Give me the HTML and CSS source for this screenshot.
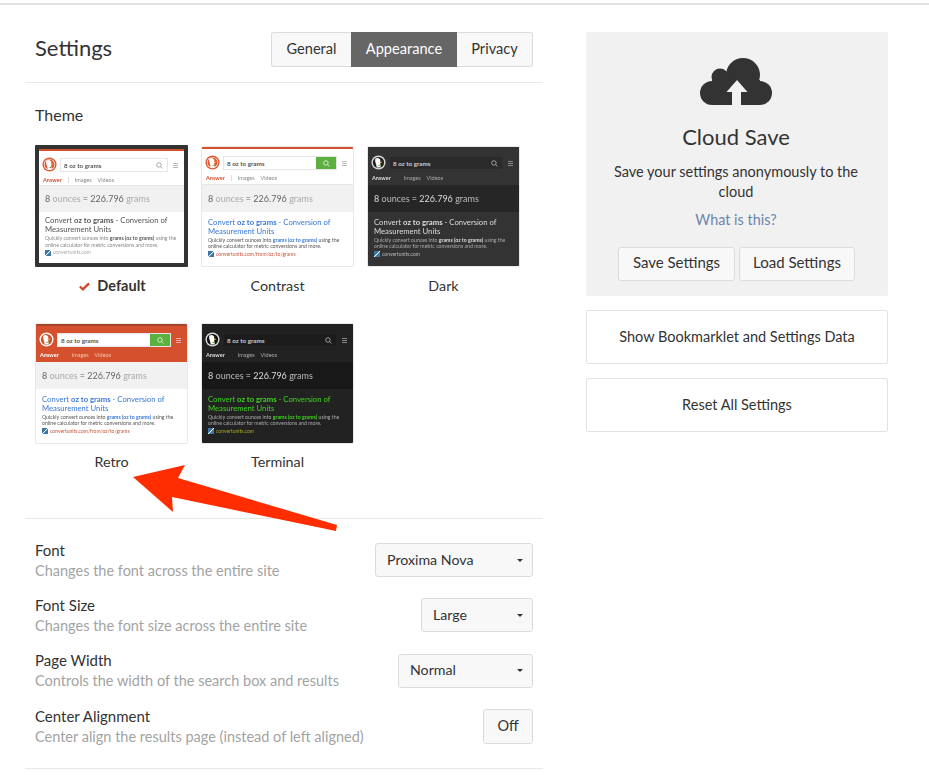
FILE: index.html
```html
<!DOCTYPE html>
<html lang="en">
<head>
<meta charset="utf-8">
<title>Settings</title>
<link rel="stylesheet" href="styles.css">
</head>
<body>
<div class="top-rule"></div>
<div class="page">
  <main class="main">
    <header class="head">
      <h1>Settings</h1>
      <nav class="tabs">
        <a class="tab">General</a>
        <a class="tab active">Appearance</a>
        <a class="tab">Privacy</a>
      </nav>
    </header>
    <section class="theme-section">
      <h2>Theme</h2>
      <div class="themes">
        <figure class="theme">
          <div class="thumb t-default selected">
            <div class="strip"></div>
            <div class="t-head">
              <svg class="duck" viewBox="0 0 16 16"><circle cx="8" cy="8" r="7.5" class="d-ring"/><circle cx="8" cy="8" r="6" class="d-line"/><circle cx="8" cy="8" r="5.300" class="d-in"/><path d="M4.600 4c2-1.800 5.400-.8 5.400 2l-.4 1.400.2 1.600.6 4.400H6C6.400 10.400 3.600 7 4.600 4z" fill="#fff"/><path d="M9.400 6.800l3 .6-2.800 1.400z" fill="#f2c14e"/><path d="M6.800 11.200l3.600-1.200v2z" fill="#67bd4a"/></svg>
              <div class="t-box"><span>8 oz to grams</span><svg class="lens" viewBox="0 0 10 10"><circle cx="4.200" cy="4.200" r="3.200"/><path d="M6.600 6.600l2.600 2.600"/></svg></div>
              <div class="burger"><i></i><i></i><i></i></div>
            </div>
            <div class="t-tabs"><b>Answer</b><span class="sep"></span><span>Images</span><span>Videos</span></div>
            <div class="t-band">8 <em>ounces</em> = 226.796 <em>grams</em></div>
            <div class="t-res">
              <p class="t-title">Convert <b>oz to grams</b> - Conversion of Measurement Units</p>
              <p class="t-desc">Quickly convert ounces into <b>grams (oz to grams)</b> using the online calculator for metric conversions and more.</p>
              <p class="t-url"><i class="fav"></i>convertunits.com</p>
            </div>
          </div>
          <figcaption class="picked"><svg class="check" viewBox="0 0 12 9"><path d="M1 4.500l3.200 3L11 1" /></svg>Default</figcaption>
        </figure>
        <figure class="theme">
          <div class="thumb t-contrast">
            <div class="strip"></div>
            <div class="t-head">
              <svg class="duck" viewBox="0 0 16 16"><circle cx="8" cy="8" r="7.5" class="d-ring"/><circle cx="8" cy="8" r="6" class="d-line"/><circle cx="8" cy="8" r="5.300" class="d-in"/><path d="M4.600 4c2-1.800 5.400-.8 5.400 2l-.4 1.400.2 1.600.6 4.400H6C6.400 10.400 3.600 7 4.600 4z" fill="#fff"/><path d="M9.400 6.800l3 .6-2.800 1.400z" fill="#f2c14e"/><path d="M6.800 11.200l3.600-1.200v2z" fill="#67bd4a"/></svg>
              <div class="t-box"><span>8 oz to grams</span><div class="go"><svg class="lens" viewBox="0 0 10 10"><circle cx="4.200" cy="4.200" r="3.200"/><path d="M6.600 6.600l2.600 2.600"/></svg></div></div>
              <div class="burger"><i></i><i></i><i></i></div>
            </div>
            <div class="t-tabs"><b>Answer</b><span class="sep"></span><span>Images</span><span>Videos</span></div>
            <div class="t-band">8 <em>ounces</em> = 226.796 <em>grams</em></div>
            <div class="t-res">
              <p class="t-title">Convert <b>oz to grams</b> - Conversion of Measurement Units</p>
              <p class="t-desc">Quickly convert ounces into <b>grams (oz to grams)</b> using the online calculator for metric conversions and more.</p>
              <p class="t-url"><i class="fav"></i>convertunits.com/from/oz/to/grams</p>
            </div>
          </div>
          <figcaption>Contrast</figcaption>
        </figure>
        <figure class="theme">
          <div class="thumb t-dark">
            <div class="strip"></div>
            <div class="t-head">
              <svg class="duck" viewBox="0 0 16 16"><circle cx="8" cy="8" r="7.5" class="d-ring"/><circle cx="8" cy="8" r="6" class="d-line"/><circle cx="8" cy="8" r="5.300" class="d-in"/><path d="M4.600 4c2-1.800 5.400-.8 5.400 2l-.4 1.400.2 1.600.6 4.400H6C6.400 10.400 3.600 7 4.600 4z" fill="#fff"/><path d="M9.400 6.800l3 .6-2.800 1.400z" fill="#f2c14e"/><path d="M6.800 11.200l3.600-1.200v2z" fill="#67bd4a"/></svg>
              <div class="t-box"><span>8 oz to grams</span><svg class="lens" viewBox="0 0 10 10"><circle cx="4.200" cy="4.200" r="3.200"/><path d="M6.600 6.600l2.600 2.600"/></svg></div>
              <div class="burger"><i></i><i></i><i></i></div>
            </div>
            <div class="t-tabs"><b>Answer</b><span class="sep"></span><span>Images</span><span>Videos</span></div>
            <div class="t-band">8 <em>ounces</em> = 226.796 <em>grams</em></div>
            <div class="t-res">
              <p class="t-title">Convert <b>oz to grams</b> - Conversion of Measurement Units</p>
              <p class="t-desc">Quickly convert ounces into <b>grams (oz to grams)</b> using the online calculator for metric conversions and more.</p>
              <p class="t-url"><i class="fav"></i>convertunits.com</p>
            </div>
          </div>
          <figcaption>Dark</figcaption>
        </figure>
        <figure class="theme">
          <div class="thumb t-retro">
            <div class="strip"></div>
            <div class="t-head">
              <svg class="duck" viewBox="0 0 16 16"><circle cx="8" cy="8" r="7.5" class="d-ring"/><circle cx="8" cy="8" r="6" class="d-line"/><circle cx="8" cy="8" r="5.300" class="d-in"/><path d="M4.600 4c2-1.800 5.400-.8 5.400 2l-.4 1.400.2 1.600.6 4.400H6C6.400 10.400 3.600 7 4.600 4z" fill="#fff"/><path d="M9.400 6.800l3 .6-2.800 1.400z" fill="#f2c14e"/><path d="M6.800 11.200l3.600-1.200v2z" fill="#67bd4a"/></svg>
              <div class="t-box"><span>8 oz to grams</span><div class="go"><svg class="lens" viewBox="0 0 10 10"><circle cx="4.200" cy="4.200" r="3.200"/><path d="M6.600 6.600l2.600 2.600"/></svg></div></div>
              <div class="burger"><i></i><i></i><i></i></div>
            </div>
            <div class="t-tabs"><b>Answer</b><span class="sep"></span><span>Images</span><span>Videos</span></div>
            <div class="t-band">8 <em>ounces</em> = 226.796 <em>grams</em></div>
            <div class="t-res">
              <p class="t-title">Convert <b>oz to grams</b> - Conversion of Measurement Units</p>
              <p class="t-desc">Quickly convert ounces into <b>grams (oz to grams)</b> using the online calculator for metric conversions and more.</p>
              <p class="t-url"><i class="fav"></i>convertunits.com/from/oz/to/grams</p>
            </div>
          </div>
          <figcaption>Retro</figcaption>
        </figure>
        <figure class="theme">
          <div class="thumb t-terminal">
            <div class="strip"></div>
            <div class="t-head">
              <svg class="duck" viewBox="0 0 16 16"><circle cx="8" cy="8" r="7.5" class="d-ring"/><circle cx="8" cy="8" r="6" class="d-line"/><circle cx="8" cy="8" r="5.300" class="d-in"/><path d="M4.600 4c2-1.800 5.400-.8 5.400 2l-.4 1.400.2 1.600.6 4.400H6C6.400 10.400 3.600 7 4.600 4z" fill="#fff"/><path d="M9.400 6.800l3 .6-2.800 1.400z" fill="#f2c14e"/><path d="M6.800 11.200l3.600-1.200v2z" fill="#67bd4a"/></svg>
              <div class="t-box"><span>8 oz to grams</span><svg class="lens" viewBox="0 0 10 10"><circle cx="4.200" cy="4.200" r="3.200"/><path d="M6.600 6.600l2.600 2.600"/></svg></div>
              <div class="burger"><i></i><i></i><i></i></div>
            </div>
            <div class="t-tabs"><b>Answer</b><span class="sep"></span><span>Images</span><span>Videos</span></div>
            <div class="t-band">8 <em>ounces</em> = 226.796 <em>grams</em></div>
            <div class="t-res">
              <p class="t-title">Convert <b>oz to grams</b> - Conversion of Measurement Units</p>
              <p class="t-desc">Quickly convert ounces into <b>grams (oz to grams)</b> using the online calculator for metric conversions and more.</p>
              <p class="t-url"><i class="fav"></i>convertunits.com</p>
            </div>
          </div>
          <figcaption>Terminal</figcaption>
        </figure>
      </div>
    </section>
    <section class="options">
      <div class="opt">
        <div class="opt-text"><h3>Font</h3><p>Changes the font across the entire site</p></div>
        <div class="select w-font">Proxima Nova<i class="caret"></i></div>
      </div>
      <div class="opt">
        <div class="opt-text"><h3>Font Size</h3><p>Changes the font size across the entire site</p></div>
        <div class="select w-size">Large<i class="caret"></i></div>
      </div>
      <div class="opt">
        <div class="opt-text"><h3>Page Width</h3><p>Controls the width of the search box and results</p></div>
        <div class="select w-width">Normal<i class="caret"></i></div>
      </div>
      <div class="opt">
        <div class="opt-text"><h3>Center Alignment</h3><p>Center align the results page (instead of left aligned)</p></div>
        <div class="toggle">Off</div>
      </div>
    </section>
  </main>
  <aside class="side">
    <section class="cloud">
      <svg class="cloud-icon" viewBox="0 0 72 47">
        <circle cx="43" cy="17" r="17" fill="#333"/>
        <circle cx="20" cy="19" r="8.500" fill="#333"/>
        <circle cx="12" cy="35" r="12" fill="#333"/>
        <circle cx="60" cy="35" r="12" fill="#333"/>
        <rect x="12" y="22" width="48" height="25" fill="#333"/>
        <path d="M37 22l10.500 12H41v13h-9V34h-5.500z" fill="#f1f1f1"/>
      </svg>
      <h2>Cloud Save</h2>
      <p>Save your settings anonymously to the cloud</p>
      <a class="what">What is this?</a>
      <div class="cloud-btns">
        <button class="btn">Save Settings</button>
        <button class="btn">Load Settings</button>
      </div>
    </section>
    <button class="wide">Show Bookmarklet and Settings Data</button>
    <button class="wide">Reset All Settings</button>
  </aside>
</div>
<svg class="arrow" viewBox="0 0 210 70" aria-hidden="true"><polygon points="1,15 53,3 46,16 205,63 204,69 40,35 41,50" fill="#ff2d00"/></svg>
</body>
</html>
```

FILE: styles.css
```css
* { box-sizing: border-box; }
html, body { margin: 0; padding: 0; }
body {
  position: relative;
  height: 775px;
  overflow: hidden;
  background: #fff;
  color: #333;
  font-family: Lato, "Liberation Sans", sans-serif;
  font-size: 14.500px;
}
p, h1, h2, h3, figure { margin: 0; font-weight: 400; }

.top-rule { height: 2px; margin-top: 3px; background: #e2e2e2; }
.page { display: flex; align-items: flex-start; padding-left: 25px; }
.main { width: 518px; margin-right: 1px; }
.side { width: 302px; margin-left: 42px; margin-top: 27px; display: flex; flex-direction: column; gap: 14px; }

.head {
  height: 78px;
  padding: 27px 10px 0;
  border-bottom: 1px solid #e8e8e8;
  display: flex;
  justify-content: space-between;
  align-items: flex-start;
}
.head h1 { font-size: 22px; line-height: 31px; }
.tabs { display: flex; height: 35px; }
.tab {
  display: flex; align-items: center; justify-content: center;
  height: 35px;
  padding-bottom: 2px;
  background: #f8f8f8;
  border: 1px solid #dcdcdc;
  color: #333;
  font-size: 14.600px;
}
.tab:nth-child(1) { width: 80px; border-radius: 3px 0 0 3px; border-right: 0; }
.tab:nth-child(2) { width: 106px; }
.tab:nth-child(3) { width: 76px; border-radius: 0 3px 3px 0; border-left: 0; }
.tab.active { background: #666; border-color: #666; color: #fff; }

.theme-section { height: 436px; padding: 21px 10px 0; border-bottom: 1px solid #e8e8e8; }
.theme-section h2 { font-size: 16px; line-height: 22px; }
.themes {
  display: grid;
  grid-template-columns: repeat(3, 151px);
  grid-auto-rows: 177px;
  column-gap: 15px;
  row-gap: 0;
  margin: 21px 0 0 1px;
}
.theme figcaption { text-align: center; font-size: 14.300px; line-height: 20px; margin-top: 9px; }
.theme:nth-child(-n+3) figcaption { margin-top: 10px; }
.theme:first-child figcaption.picked { margin-top: 10px; font-size: 14.500px; font-weight: 700; padding-left: 2px; }
.check { width: 11px; height: 9px; margin-right: 7px; fill: none; stroke: #cf4a28; stroke-width: 2.600; }

.thumb {
  height: 119px;
  overflow: hidden;
  border-radius: 1px;
  display: flex;
  flex-direction: column;
  box-shadow: 0 0 0 1px #e8e8e8;
  --bg: #fff; --box: #fff; --boxb: #e6e6e6; --boxt: #555; --band: #f1f1f1;
  --num: #666; --unit: #aaa; --title: #555; --desc: #888; --url: #aaa; --tab: #888; --on: #d5502c;
  --ring: #de5833; --line: #fff; --in: #de5833; --bar: #bbb; --lens: #888; --head: #fff; --strip: #d5502c;
  background: var(--bg);
  filter: blur(.3px);
}
.thumb.selected {
  height: 122px;
  margin: -2px -1px -1px -1px;
  border: 4px solid #333;
  box-shadow: none;
}
.selected .t-tabs { height: 12px; }
.selected .t-band { height: 26px; line-height: 26px; }
.selected .t-res { padding-top: 4px; }
.strip { height: 2px; flex: none; background: var(--strip); }
.t-head { flex: none; height: 23px; padding: 6px 6px 0 3px; display: flex; gap: 3px; align-items: flex-start; background: var(--head); }
.duck { width: 15px; height: 15px; flex: none; }
.d-ring { fill: var(--ring); }
.d-line { fill: var(--line); }
.d-in { fill: var(--in); }
.t-box {
  flex: 1; height: 14px; margin-top: 1px; display: flex; align-items: center; justify-content: space-between;
  background: var(--box); border: 1px solid var(--boxb); padding-left: 3px;
  font-size: 6.300px; font-weight: 700; color: var(--boxt);
}
.lens { width: 7px; height: 7px; margin-right: 4px; fill: none; stroke: var(--lens); stroke-width: 1; }
.go { width: 20px; height: 100%; background: #5cb03f; display: flex; align-items: center; justify-content: center; }
.go .lens { margin: 0; stroke: #fff; }
.burger { width: 5px; margin: 6px 0 0 2px; display: flex; flex-direction: column; gap: 1px; }
.burger i { height: 1px; background: var(--bar); display: block; }
.t-tabs {
  flex: none; height: 13px; padding: 0 4px; display: flex; align-items: center; gap: 6px;
  font-size: 5.500px; color: var(--tab); background: var(--head);
  border-bottom: 1px solid var(--boxb);
}
.t-tabs b { color: var(--on); }
.sep { width: 1px; height: 6px; background: #ddd; margin: 0 0; }
.t-band {
  flex: none; height: 27px; padding-left: 6px;
  background: var(--band); color: var(--num); font-size: 9px; line-height: 27px; white-space: nowrap;
}
.t-band em { font-style: normal; color: var(--unit); }
.t-res { flex: 1; padding: 5.500px 6px 0; }
.t-title { font-size: 7.700px; line-height: 9px; color: var(--title); }
.t-desc { margin-top: 1px; max-width: 132px; font-size: 5.200px; line-height: 6.500px; color: var(--desc); }
.t-desc b { color: var(--title); }
.t-url { margin-top: 1px; display: flex; align-items: center; gap: 2px; font-size: 5px; line-height: 7px; color: var(--url); }
.fav { width: 6px; height: 6px; background: linear-gradient(135deg, #3b78a8 45%, #fff 50%, #3b78a8 60%); flex: none; }

.t-contrast { --title: #3a78d6; --url: #c9563a; --desc: #555; }
.t-dark { --bg: #333; --head: #333; --strip: #333; --box: #2a2a2a; --boxb: #333; --boxt: #ccc; --band: #262626; --num: #ddd; --unit: #bbb; --title: #ddd; --desc: #aaa; --url: #bbb; --tab: #aaa; --on: #ddd; --ring: #ddd; --line: #222; --in: #222; --bar: #888; --lens: #ccc; }
.t-retro { --head: #d5502c; --strip: #a9432a; --title: #3a78d6; --url: #c9563a; --desc: #555; --tab: #f2c5b5; --on: #fff; --bar: #eaa; --ring: #fff; --line: #d5502c; --in: #d5502c; }
.t-retro .t-tabs { border-bottom-color: #d5502c; }
.t-terminal { --bg: #222; --head: #222; --strip: #222; --box: #1c1c1c; --boxb: #222; --boxt: #ccc; --band: #181818; --num: #ddd; --unit: #bbb; --title: #3fd41f; --desc: #aaa; --url: #a8a81f; --tab: #aaa; --on: #ddd; --ring: #ddd; --line: #111; --in: #111; --bar: #888; --lens: #ccc; }
.t-retro .sep, .t-dark .sep, .t-terminal .sep { background: transparent; }

.options { height: 250px; padding: 14px 10px 0; border-bottom: 1px solid #e8e8e8; display: flex; flex-direction: column; }
.opt { display: flex; justify-content: space-between; align-items: center; height: 55.300px; padding-bottom: 1px; }
.opt h3 { font-size: 15px; line-height: 20px; }
.opt p { font-size: 14.500px; line-height: 20px; margin-top: 1px; color: #a3a3a3; }
.select {
  height: 34px; padding: 0 9px 2px 11px; display: flex; align-items: center; justify-content: space-between;
  background: #f8f8f8; border: 1px solid #dcdcdc; border-radius: 3px; font-size: 14.200px;
}
.w-font { width: 158px; }
.w-size { width: 112px; }
.w-width { width: 135px; }
.caret { width: 0; height: 0; margin-top: 2px; border: 3px solid transparent; border-top: 3.500px solid #333; border-bottom: 0; }
.toggle {
  width: 50px; height: 35px; padding-bottom: 2px; display: flex; align-items: center; justify-content: center;
  background: #f8f8f8; border: 1px solid #dcdcdc; border-radius: 3px; font-size: 14.500px;
}

.cloud { height: 264px; padding: 26px 2px 0 0; background: #f1f1f1; border-radius: 2px; text-align: center; }
.cloud-icon { width: 72px; height: 47px; display: block; margin: 0 auto; }
.cloud h2 { font-size: 22px; line-height: 28px; margin-top: 18px; }
.cloud p { font-size: 14.500px; line-height: 20px; margin: 11px 20px 0; }
.what { display: block; margin-top: 8px; line-height: 20px; font-size: 14.400px; color: #6b85ad; }
.cloud-btns { display: flex; justify-content: center; gap: 4px; margin: 17px -1px 0 0; }
.btn {
  width: 117px; height: 34px; padding: 0 0 5px; background: #f8f8f8; border: 1px solid #dcdcdc; border-radius: 3px;
  font: inherit; font-size: 15px; color: #333;
}
.btn:last-child { width: 116px; }
.wide {
  height: 54px; padding: 0 0 2px; background: #fff; border: 1px solid #e2e2e2; border-radius: 2px;
  font: inherit; font-size: 14.500px; color: #333;
}

.arrow { position: absolute; left: 132px; top: 462px; width: 210px; height: 70px; overflow: visible; }
```
